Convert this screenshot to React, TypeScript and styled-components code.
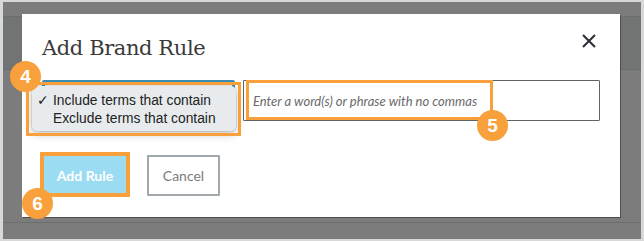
import React from 'react'
import styled, { createGlobalStyle } from 'styled-components'

const orange = '#f8a03c'

const GlobalStyle = createGlobalStyle`
  html, body {
    margin: 0;
    padding: 0;
    background: #d8d8d8;
  }
  * {
    box-sizing: border-box;
  }
`

interface Badge {
  n: number
  x: number
  y: number
}
const badges: Badge[] = [
  { n: 4, x: 10, y: 61 },
  { n: 5, x: 477, y: 110 },
  { n: 6, x: 22, y: 188 },
]

const App: React.FC = () => {
  return (
    <>
      <GlobalStyle />
      <Frame>
        <Backdrop>
          <Band height={15} />
          <Band height={53} dark />
          <Band height={153} />
          <Band height={16} />
        </Backdrop>

        <Modal>
          <Header>
            <Title>Add Brand Rule</Title>
            <CloseButton aria-label="Close">
              <svg width="14" height="14" viewBox="0 0 14 14">
                <path d="M1 1 L13 13 M13 1 L1 13" stroke="#2c2c36" strokeWidth="2" />
              </svg>
            </CloseButton>
          </Header>

          <RuleRow>
            <SelectBox>
              <Popup>
                <PopupItem>
                  <Check>✓</Check>Include terms that contain
                </PopupItem>
                <PopupItem>
                  <Check />
                  Exclude terms that contain
                </PopupItem>
              </Popup>
            </SelectBox>
            <TermInput readOnly placeholder="Enter a word(s) or phrase with no commas" />
          </RuleRow>

          <Actions>
            <PrimaryButton>Add Rule</PrimaryButton>
            <SecondaryButton>Cancel</SecondaryButton>
          </Actions>
        </Modal>

        <Highlight left={26} top={82} width={215} height={54} />
        <Highlight left={246} top={80} width={247} height={40} />
        <Highlight left={40} top={152} width={90} height={45} thick />

        {badges.map((b) => (
          <Step key={b.n} style={{ left: b.x, top: b.y }}>
            {b.n}
          </Step>
        ))}
      </Frame>
    </>
  )
}

const Frame = styled.div`
  position: relative;
  width: 644px;
  height: 241px;
  padding: 2px 3px 2px 3px;
  background: #d8d8d8;
  overflow: hidden;
`
const Backdrop = styled.div`
  display: flex;
  flex-direction: column;
  height: 100%;
  background: #7c7c7c;
`
const Band = styled.div<{ height: number; dark?: boolean }>`
  height: ${(p) => p.height}px;
  background: ${(p) => (p.dark ? '#727474' : '#7c7c7c')};
  border-bottom: 1px solid #6c6e6e;
  &:last-child {
    border-bottom: none;
    flex: 1;
  }
`

const Modal = styled.div`
  position: absolute;
  left: 22px;
  top: 14px;
  width: 598px;
  height: 203px;
  padding: 0 20px;
  background: #fff;
  box-shadow: 1px 1px 0 #4b5050;
`
const Header = styled.div`
  display: flex;
  justify-content: space-between;
  padding-top: 21px;
`
const Title = styled.h1`
  margin: 0;
  font-family: 'DejaVu Serif', 'Liberation Serif', serif;
  font-weight: 400;
  font-size: 21px;
  line-height: 26px;
  letter-spacing: -0.4px;
  color: #3a3a3a;
`
const CloseButton = styled.button`
  width: 22px;
  height: 22px;
  margin-top: -5px;
  padding: 0;
  border: none;
  background: none;
  display: flex;
  align-items: center;
  justify-content: center;
`

const RuleRow = styled.div`
  display: flex;
  gap: 8px;
  height: 41px;
  margin-top: 19px;
`
const SelectBox = styled.div`
  position: relative;
  width: 193px;
  border: 3px solid #3b8db5;
  border-radius: 2px;
  background: #fff;
`
const Popup = styled.div`
  position: absolute;
  left: -13px;
  top: 3px;
  width: 204px;
  height: 45px;
  padding: 5px 0 4px 5px;
  background: #e7ebed;
  border-radius: 5px;
  box-shadow: 0 3px 10px rgba(0, 0, 0, 0.25), 0 0 0 1px rgba(0, 0, 0, 0.08);
`
const PopupItem = styled.div`
  display: flex;
  align-items: center;
  height: 18px;
  font-family: 'Liberation Sans', Arial, sans-serif;
  font-size: 13.8px;
  color: #222;
  white-space: nowrap;
`
const Check = styled.span`
  width: 16px;
  font-family: 'DejaVu Sans', sans-serif;
  font-size: 14px;
  font-weight: 700;
`
const TermInput = styled.input`
  flex: 1;
  height: 41px;
  padding: 0 0 0 9px;
  border: 1px solid #5e6367;
  border-radius: 1px;
  font-family: Lato, 'Open Sans', sans-serif;
  font-style: italic;
  font-size: 13px;
  outline: none;
  &::placeholder {
    color: #6a6a6a;
  }
`

const Actions = styled.div`
  display: flex;
  gap: 19px;
  margin-top: 34px;
`
const BaseButton = styled.button`
  height: 41px;
  padding: 0;
  font-family: Lato, 'Open Sans', sans-serif;
  font-size: 14px;
  border-radius: 1px;
`
const PrimaryButton = styled(BaseButton)`
  width: 86px;
  border: none;
  background: #9cdcf2;
  color: #fff;
  font-weight: 700;
`
const SecondaryButton = styled(BaseButton)`
  width: 73px;
  border: 2px solid #a0a8ab;
  background: #fff;
  color: #7c7c7c;
`

const Highlight = styled.div<{ left: number; top: number; width: number; height: number; thick?: boolean }>`
  position: absolute;
  left: ${(p) => p.left}px;
  top: ${(p) => p.top}px;
  width: ${(p) => p.width}px;
  height: ${(p) => p.height}px;
  border: ${(p) => (p.thick ? 4 : 3)}px solid ${orange};
  pointer-events: none;
`
const Step = styled.div`
  position: absolute;
  width: 31px;
  height: 31px;
  border-radius: 50%;
  background: ${orange};
  color: #fff;
  display: flex;
  align-items: center;
  justify-content: center;
  font-family: 'Liberation Sans', Arial, sans-serif;
  font-weight: 700;
  font-size: 19px;
`

export default App
